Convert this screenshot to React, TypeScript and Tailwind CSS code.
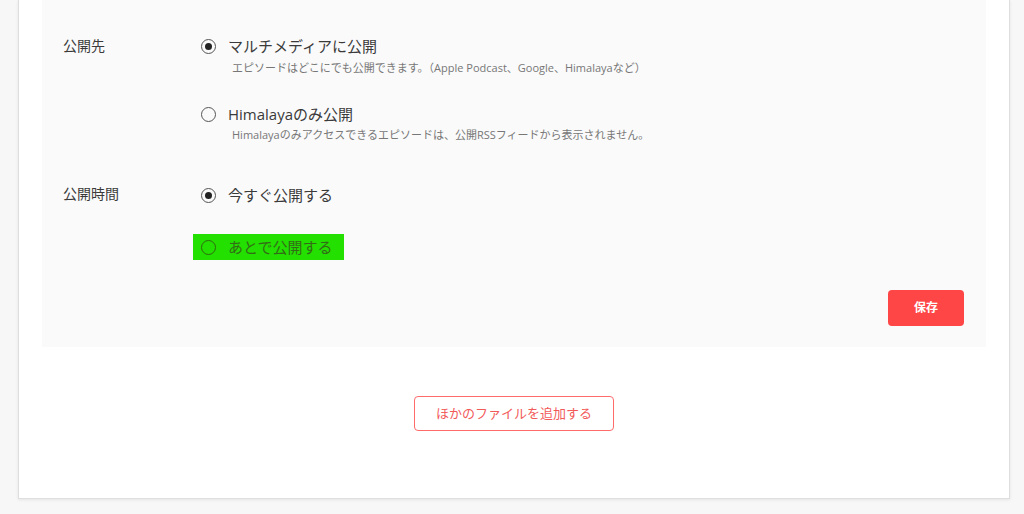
import React from "react";

const font = { fontFamily: '"Open Sans", "Noto Sans CJK JP", sans-serif' };

function Radio({ checked, color = "#555" }: { checked?: boolean; color?: string }) {
  return (
    <span
      className="flex h-[15px] w-[15px] shrink-0 items-center justify-center rounded-full border-[1.5px]"
      style={{ borderColor: color }}
    >
      {checked && <span className="h-[7px] w-[7px] rounded-full bg-[#222]" />}
    </span>
  );
}

export default function App() {
  return (
    <div className="min-h-[514px] w-[1024px] bg-[#f7f7f7]" style={font}>
      <div className="mx-[18px] w-[992px] border-x border-b border-[#dedede] bg-white pb-[67px] shadow-[0_1px_3px_rgba(0,0,0,0.08)]">
        <div className="mx-[23px] bg-[#fafafa] pb-[21px] pl-[21px] pr-[22px] pt-[36px]">
          <div className="flex">
            <div className="w-[138px] pt-[1px] text-[14px] leading-[18px] text-[#3a3a3a]">公開先</div>
            <div className="flex flex-col">
              <div className="flex h-[20px] items-center">
                <Radio checked />
                <span className="ml-[12px] text-[15px] leading-[20px] text-[#3a3a3a]">マルチメディアに公開</span>
              </div>
              <div className="ml-[31px] mt-[4px] text-[11px] leading-[16px] text-[#777]">
                エピソードはどこにでも公開できます。（Apple Podcast、Google、Himalayaなど）
              </div>
              <div className="mt-[28px] flex h-[20px] items-center">
                <Radio />
                <span className="ml-[12px] text-[15px] leading-[20px] text-[#3a3a3a]">Himalayaのみ公開</span>
              </div>
              <div className="ml-[31px] mt-[3px] text-[11px] leading-[16px] text-[#777]">
                Himalayaのみアクセスできるエピソードは、公開RSSフィードから表示されません。
              </div>
            </div>
          </div>

          <div className="mt-[42px] flex">
            <div className="w-[130px] text-[14px] leading-[18px] text-[#3a3a3a]">公開時間</div>
            <div className="flex flex-col">
              <div className="ml-[8px] flex h-[20px] items-center">
                <Radio checked />
                <span className="ml-[12px] text-[15px] leading-[20px] text-[#3a3a3a]">今すぐ公開する</span>
              </div>
              <div className="mt-[29px] flex h-[26px] w-[151px] items-center bg-[#23e000] pl-[8px]">
                <Radio color="#2f6a10" />
                <span className="ml-[12px] text-[15px] leading-[20px] text-[#336b18]">あとで公開する</span>
              </div>
            </div>
          </div>

          <div className="mt-[30px] flex justify-end">
            <button className="h-[36px] w-[76px] rounded-[4px] bg-[#ff4646] text-[12px] font-bold text-white">
              保存
            </button>
          </div>
        </div>

        <div className="mt-[49px] flex justify-center">
          <button className="h-[35px] w-[200px] rounded-[4px] border border-[#ff6b6b] bg-white text-[13px] text-[#f25a5a]">
            ほかのファイルを追加する
          </button>
        </div>
      </div>
    </div>
  );
}
